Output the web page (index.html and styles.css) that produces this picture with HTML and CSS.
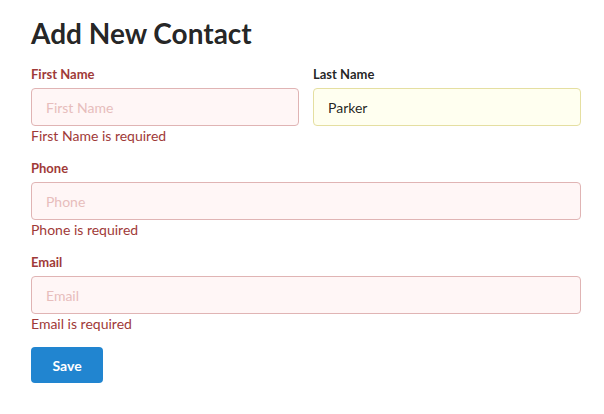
FILE: index.html
```html
<!DOCTYPE html>
<html>
<head>
<meta charset="utf-8">
<link rel="stylesheet" href="styles.css">
</head>
<body>
<div class="page">
  <h1 class="title">Add New Contact</h1>
  <form class="form">
    <div class="row">
      <div class="field error">
        <label class="label">First Name</label>
        <input class="input" type="text" placeholder="First Name">
        <div class="msg">First Name is required</div>
      </div>
      <div class="field">
        <label class="label">Last Name</label>
        <input class="input filled" type="text" value="Parker">
      </div>
    </div>
    <div class="field error">
      <label class="label">Phone</label>
      <input class="input" type="text" placeholder="Phone">
      <div class="msg">Phone is required</div>
    </div>
    <div class="field error">
      <label class="label">Email</label>
      <input class="input" type="text" placeholder="Email">
      <div class="msg">Email is required</div>
    </div>
    <button class="btn" type="button">Save</button>
  </form>
</div>
</body>
</html>
```

FILE: styles.css
```css
* { box-sizing: border-box; }
html, body { margin: 0; padding: 0; background: #fff; }
body {
  font-family: Lato, "Helvetica Neue", Arial, sans-serif;
  font-size: 14px;
  line-height: 1.4285em;
  color: rgba(0,0,0,.87);
}
.page {
  padding: 15px 23px 0 31px;
}
.title {
  margin: 0 0 14px;
  font-size: 28px;
  line-height: 36px;
  font-weight: 700;
  color: rgba(0,0,0,.87);
}
.form { display: flex; flex-direction: column; }
.row {
  display: flex;
  gap: 14px;
}
.row .field { flex: 1 1 0; min-width: 0; }
.field {
  display: flex;
  flex-direction: column;
  margin-bottom: 14px;
}
.label {
  display: block;
  font-size: 13px;
  font-weight: 700;
  line-height: 19px;
  margin-bottom: 4px;
  color: rgba(0,0,0,.87);
}
.input {
  display: block;
  width: 100%;
  height: 38px;
  font-family: Lato, "Helvetica Neue", Arial, sans-serif;
  font-size: 14px;
  line-height: 17px;
  padding: 10px 14px 9px;
  border: 1px solid rgba(34,36,38,.15);
  border-radius: 4px;
  background: #fff;
  color: rgba(0,0,0,.87);
  outline: none;
}
.input.filled {
  background: #fffff0;
  border-color: #e5dfa1;
}
.error .label { color: #9f3a38; }
.error .input {
  background: #fff6f6;
  border-color: #e0b4b4;
  color: #9f3a38;
}
.error .input::placeholder { color: #e7bdbc; opacity: 1; }
.msg {
  font-size: 14px;
  line-height: 19px;
  color: #9f3a38;
}
.btn {
  align-self: flex-start;
  height: 36px;
  padding: 0 21.5px;
  font-family: Lato, "Helvetica Neue", Arial, sans-serif;
  font-size: 14px;
  font-weight: 700;
  color: #fff;
  background: #2185d0;
  border: none;
  border-radius: 4px;
  cursor: pointer;
}
```
